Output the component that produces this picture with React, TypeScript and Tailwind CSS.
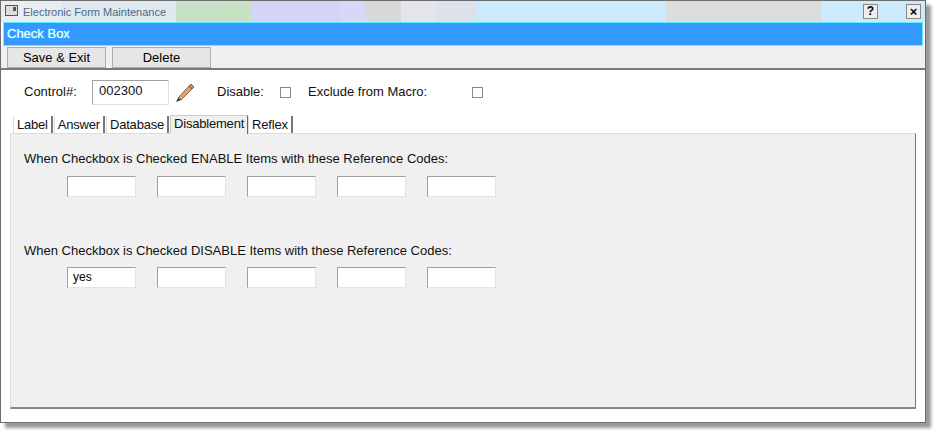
import React from "react";

const F = { fontFamily: "'Liberation Sans', Arial, sans-serif" };

function Box({ value = "" }: { value?: string }) {
  return (
    <div className="w-[69px] h-[21px] bg-white border border-t-[#a0a0a0] border-l-[#a0a0a0] border-r-[#e3e3e3] border-b-[#e3e3e3] text-[12px] pl-[5px] leading-[19px] text-black">
      {value}
    </div>
  );
}

function Chk() {
  return <div className="w-[11px] h-[11px] bg-white border border-[#8a8a8a]" />;
}

export default function App() {
  const tabs = ["Label", "Answer", "Database", "Disablement", "Reflex"];
  return (
    <div className="w-[938px] h-[434px] bg-white" style={F}>
      <div className="w-[926px] h-[423px] border border-[#6d6d6d] bg-white flex flex-col shadow-[5px_5px_3px_#9a9a9a] relative">
        {/* title bar */}
        <div className="h-[21px] flex relative">
          <div className="w-[60px] bg-[#e9eef2]" />
          <div className="w-[115px] bg-[#dfe9ee]" />
          <div className="w-[38px] bg-[#c8dfc8]" />
          <div className="w-[37px] bg-[#c8e0c4]" />
          <div className="w-[90px] bg-[#d4d4f8]" />
          <div className="w-[25px] bg-[#d8d8f6]" />
          <div className="w-[35px] bg-[#d8d8d8]" />
          <div className="w-[35px] bg-[#e4e4ec]" />
          <div className="w-[40px] bg-[#dbe2ea]" />
          <div className="w-[190px] bg-[#cdeafc]" />
          <div className="w-[155px] bg-[#dcdcdc]" />
          <div className="flex-1 bg-[#cdeafc]" />
          <div className="absolute left-[4px] top-[4px] w-[13px] h-[11px] border border-[#555] bg-[#ddd] flex items-start justify-end"><div className="w-[3px] h-[4px] bg-[#555] mr-[1px] mt-[1px]" /></div>
          <div className="absolute left-[22px] top-[3px] text-[11px] text-[#4a6a8a]">Electronic Form Maintenance</div>
          <div className="absolute left-[862px] top-[3px] w-[15px] h-[15px] bg-[#eee] border border-[#888] text-[12px] font-bold leading-[13px] text-center">?</div>
          <div className="absolute left-[905px] top-[3px] w-[15px] h-[15px] bg-[#eee] border border-[#888] text-[13px] font-bold leading-[13px] text-center">×</div>
        </div>
        {/* blue header */}
        <div className="mx-[2px] h-[24px] bg-[#3399ff] border border-[#5ff0ff] text-[13px] text-[#eaffff] px-[3px] leading-[21px] [text-shadow:0_0_1px_#9ff]">
          Check Box
        </div>
        {/* toolbar */}
        <div className="h-[24px] bg-[#f0f0f0] border-b-2 border-[#7a7a7a] flex items-start gap-[6px] pl-[6px] pt-[1px]">
          <div className="w-[99px] h-[21px] border border-[#adadad] bg-[#e6e6e6] text-[13px] text-center leading-[19px]">Save &amp; Exit</div>
          <div className="w-[99px] h-[21px] border border-[#adadad] bg-[#e6e6e6] text-[13px] text-center leading-[19px]">Delete</div>
        </div>
        {/* body */}
        <div className="flex-1 flex flex-col px-[9px] pb-[13px] text-[12px] text-[#111]">
          <div className="h-[44px] flex items-center pl-[14px] text-[13px]">
            <span className="w-[68px]">Control#:</span>
            <div className="w-[77px] h-[25px] border border-t-[#a0a0a0] border-l-[#a0a0a0] border-r-[#e0e0e0] border-b-[#e0e0e0] pl-[6px] leading-[19px]">002300</div>
            <svg width="22" height="22" viewBox="0 0 22 22" className="ml-[4px]">
              <path d="M5 17 L16 5 L19 8 L8 19 Z" fill="#d9a66e" stroke="#6b4a2a" strokeWidth="0.8" />
              <path d="M16 5 L18 3 L21 6 L19 8 Z" fill="#c98a8a" stroke="#6b4a2a" strokeWidth="0.8" />
              <path d="M5 17 L3 21 L8 19 Z" fill="#333" />
            </svg>
            <span className="ml-[22px]">Disable:</span>
            <div className="ml-[16px]"><Chk /></div>
            <span className="ml-[17px]">Exclude from Macro:</span>
            <div className="ml-[45px]"><Chk /></div>
          </div>
          <div className="flex items-end h-[19px] pl-[3px] text-[13px] tracking-[-0.2px]">
            {tabs.map((t) => {
              const sel = t === "Disablement";
              return (
                <div
                  key={t}
                  className={
                    sel
                      ? "h-[19px] px-[3px] bg-[#f0f0f0] border-t border-l border-[#ccc] border-r border-r-[#666] -mb-[1px] relative z-10 leading-[15px]"
                      : "h-[17px] px-[3px] border-r-2 border-[#777] border-l border-l-[#ddd] mr-[1px] leading-[17px]"
                  }
                >
                  {t}
                </div>
              );
            })}
          </div>
          <div className="flex-1 bg-[#f0f0f0] border border-t-[#ddd] border-l-[#ddd] border-r-[#777] border-b-2 border-b-[#888] pl-[13px] pt-[15px] text-[13px]">
            <div>When Checkbox is Checked ENABLE Items with these Reference Codes:</div>
            <div className="flex gap-[21px] pl-[43px] mt-[7px]">
              <Box /><Box /><Box /><Box /><Box />
            </div>
            <div className="mt-[44px]">When Checkbox is Checked DISABLE Items with these Reference Codes:</div>
            <div className="flex gap-[21px] pl-[43px] mt-[7px]">
              <Box value="yes" /><Box /><Box /><Box /><Box />
            </div>
          </div>
        </div>
      </div>
    </div>
  );
}
